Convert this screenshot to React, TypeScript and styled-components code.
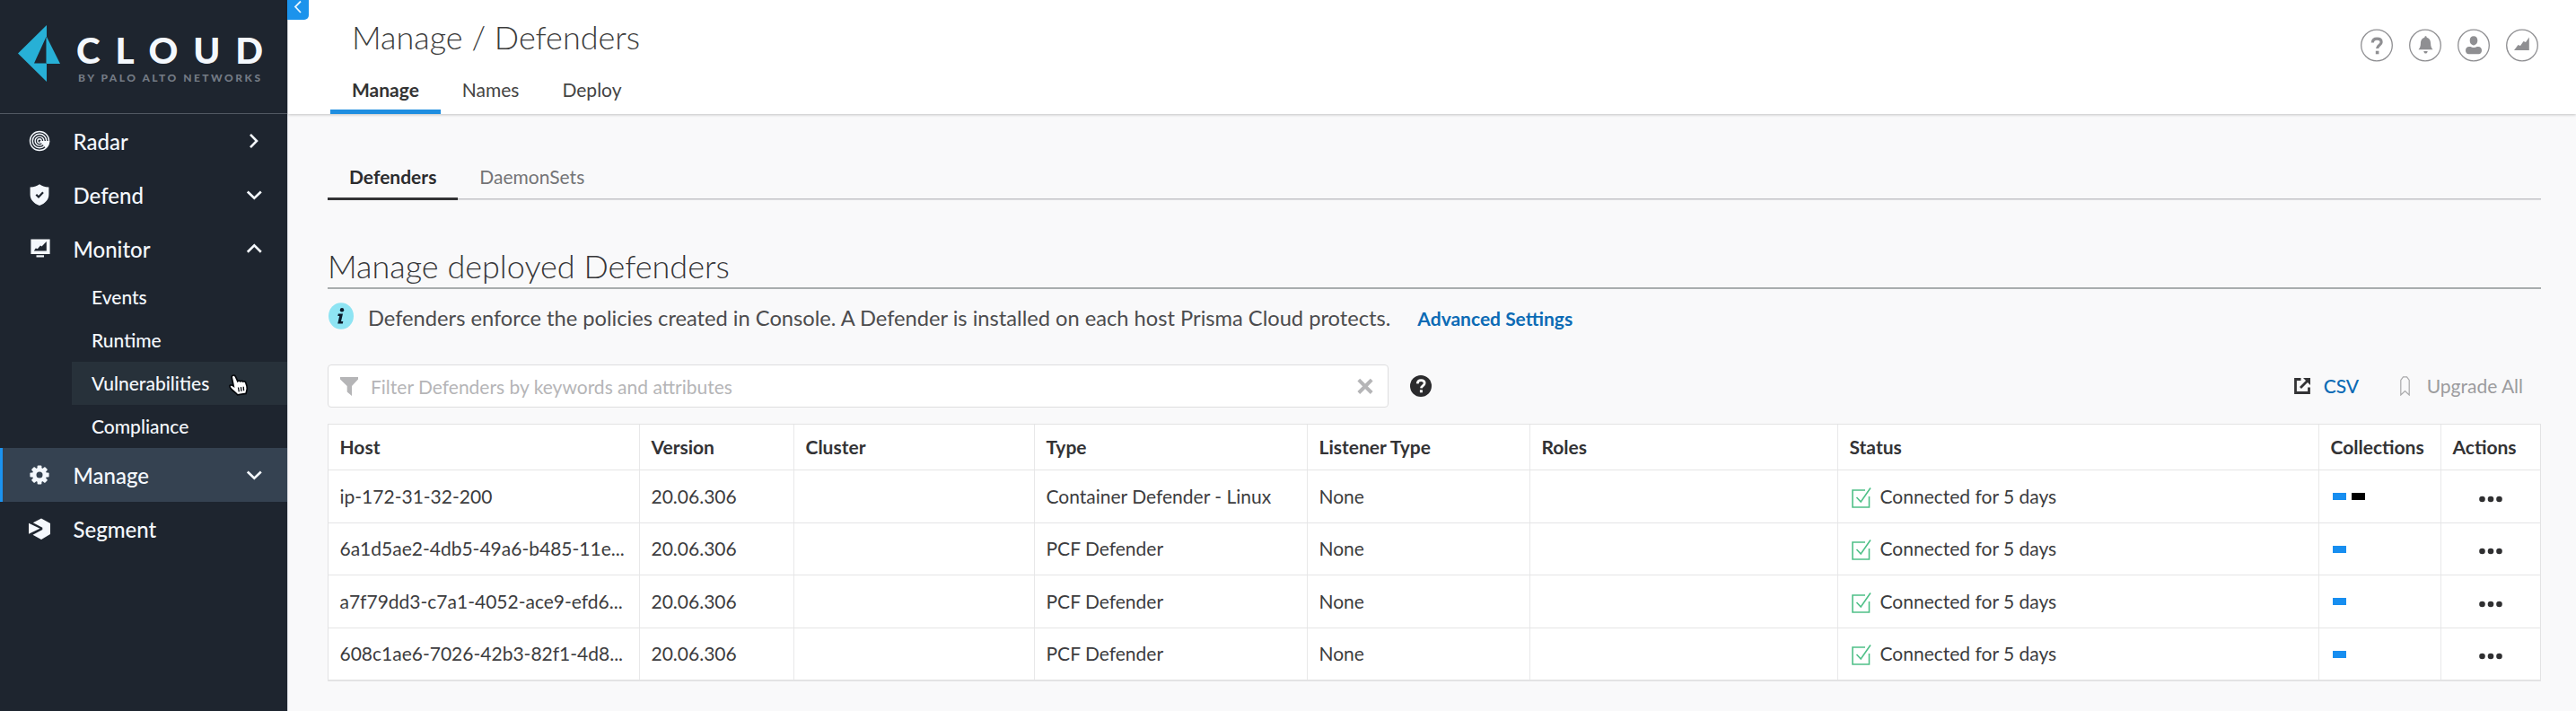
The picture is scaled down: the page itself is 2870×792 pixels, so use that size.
import React from "react";
import styled, { createGlobalStyle } from "styled-components";

const GlobalStyle = createGlobalStyle`
  *, *::before, *::after { box-sizing: border-box; }
  body {
    margin: 0;
    background: #f9f9fa;
    color: #3c3c3e;
    font-family: Lato, "Liberation Sans", sans-serif;
    font-size: 21px;
  }
`;

const Shell = styled.div`
  display: flex;
  width: 2870px;
  height: 792px;
  overflow: hidden;
`;

/* ---------- sidebar ---------- */

const Sidebar = styled.aside`
  flex: 0 0 320px;
  background: #1e252f;
  color: #f4f8fd;
`;

const Brand = styled.div`
  display: flex;
  height: 127px;
  padding: 28px 0 0 20px;
  border-bottom: 1px solid #525963;
`;

const Logo = styled.svg`
  display: block;
  width: 48px;
  height: 64px;
`;

const BrandText = styled.div`
  display: flex;
  flex-direction: column;
  padding: 3px 0 0 17px;
`;

const BrandName = styled.div`
  font-size: 40.5px;
  font-weight: 900;
  line-height: 49px;
  letter-spacing: 16.8px;
  white-space: nowrap;
`;

const BrandTag = styled.div`
  padding-left: 2px;
  color: #737a84;
  font-size: 12px;
  font-weight: 900;
  line-height: 14px;
  letter-spacing: 2.5px;
  white-space: nowrap;
`;

const NavRow = styled.div<{ $active?: boolean }>`
  display: flex;
  align-items: center;
  height: 60px;
  padding: 0 28px 0 ${(p) => (p.$active ? 29 : 32)}px;
  border-left: ${(p) => (p.$active ? "3px solid #1b93f0" : "0")};
  background: ${(p) => (p.$active ? "#354251" : "transparent")};
`;

const NavIcon = styled.svg`
  display: block;
  width: 24px;
  height: 24px;
`;

const NavLabel = styled.span`
  flex: 1;
  padding: 1px 0 0 25.5px;
  font-size: 24px;
  font-weight: 500;
  line-height: 30px;
`;

const Chevron = styled.svg`
  display: block;
  width: 18px;
  height: 18px;
  fill: none;
  stroke: currentColor;
  stroke-width: 2.6;
`;

const SubRow = styled.div<{ $hover?: boolean }>`
  display: flex;
  align-items: center;
  height: 48px;
  margin-left: 80px;
  padding: 0 0 2px 22px;
  background: ${(p) => (p.$hover ? "#27313a" : "transparent")};
  font-size: 21px;
  font-weight: 500;
`;

const Pointer = styled.svg`
  width: 24px;
  height: 26px;
  margin: 6px 0 0 21px;
`;

/* ---------- main column ---------- */

const Main = styled.main`
  flex: 1;
  min-width: 0;
  border-left: 1px solid #d5d8de;
`;

const Header = styled.header`
  position: relative;
  display: flex;
  justify-content: space-between;
  height: 127px;
  padding: 19px 42px 0 47px;
  background: #fff;
  box-shadow: 0 1px 3px rgba(0, 0, 0, 0.22);
`;

const CollapseTab = styled.div`
  position: absolute;
  top: 0;
  left: -1px;
  display: flex;
  justify-content: center;
  width: 24px;
  height: 22px;
  border-radius: 0 0 5px 0;
  background: #1b93ec;
  color: #e8f6ff;
`;

const PageTitle = styled.h1`
  margin: 0;
  padding-left: 24px;
  color: #3c3c3c;
  font-size: 36px;
  font-weight: 300;
  line-height: 45px;
`;

const Tabs = styled.nav`
  display: flex;
  margin-top: 13px;
`;

const Tab = styled.div<{ $active?: boolean }>`
  height: 50px;
  padding: 0 24px;
  border-bottom: 5px solid ${(p) => (p.$active ? "#1f8ee0" : "transparent")};
  color: ${(p) => (p.$active ? "#333" : "#444")};
  font-size: 21px;
  font-weight: ${(p) => (p.$active ? 700 : 400)};
  line-height: 46px;
`;

const HeaderIcons = styled.div`
  display: flex;
  gap: 18px;
  margin-top: 13px;
`;

const RoundIcon = styled.svg`
  display: block;
  width: 36px;
  height: 37px;
`;

const Content = styled.div`
  padding: 47px 39px 0 44px;
`;

const SubTabs = styled.div`
  display: flex;
  height: 49px;
  background: linear-gradient(#c3c3c6, #c3c3c6) 0 47px / 100% 1.5px no-repeat;
`;

const SubTab = styled.div<{ $active?: boolean }>`
  padding: 0 24px;
  border-bottom: 3px solid ${(p) => (p.$active ? "#333335" : "transparent")};
  color: ${(p) => (p.$active ? "#2c2c2e" : "#747476")};
  font-size: 21px;
  font-weight: ${(p) => (p.$active ? 700 : 400)};
  line-height: 46px;
`;

const SectionTitle = styled.h2`
  height: 99px;
  margin: 0;
  padding-top: 50px;
  border-bottom: 2px solid #a9adae;
  color: #363638;
  font-size: 36px;
  font-weight: 300;
  line-height: 46px;
`;

const Notice = styled.div`
  display: flex;
  align-items: center;
  height: 60px;
  padding-left: 1px;
  color: #4c4c4e;
  font-size: 23.68px;
`;

const NoticeText = styled.span`
  padding-top: 3px;
`;

const InfoIcon = styled.svg`
  width: 28px;
  height: 30px;
  margin-right: 16px;
`;

const NoticeLink = styled.a`
  margin-left: 30px;
  padding-top: 4px;
  color: #0c6bb5;
  font-size: 21px;
  font-weight: 700;
`;

const Toolbar = styled.div`
  display: flex;
  align-items: center;
  height: 48px;
  margin-top: 24px;
`;

const FilterBox = styled.div`
  display: flex;
  align-items: center;
  width: 1182px;
  height: 48px;
  padding: 0 16px 0 13px;
  border: 1.5px solid #dededf;
  border-radius: 4px;
  background: #fff;
  color: #b5b5b7;
`;

const FilterText = styled.span`
  flex: 1;
  padding: 1px 0 0 14px;
  font-size: 21px;
`;

const SmallIcon = styled.svg<{ $w: number; $h: number }>`
  display: block;
  flex: none;
  width: ${(p) => p.$w}px;
  height: ${(p) => p.$h}px;
`;

const HelpIcon = styled(SmallIcon)`
  margin-left: 24px;
`;

const ToolActions = styled.div`
  display: flex;
  align-items: center;
  margin-left: auto;
  padding-right: 20px;
`;

const CsvLink = styled.a`
  margin: 0 46px 0 15px;
  padding-bottom: 2px;
  color: #0c6bb5;
  font-size: 21px;
  font-weight: 500;
`;

const UpgradeAll = styled.span`
  margin-left: 18.5px;
  padding-bottom: 2px;
  color: #9c9c9e;
  font-size: 21px;
`;

const Grid = styled.div`
  margin-top: 18px;
  border: 1px solid #e3e3e4;
  border-bottom-width: 2px;
  background: #fff;
`;

const GridRow = styled.div<{ $head?: boolean }>`
  display: grid;
  grid-template-columns: 346px 172px 268px 304px 248px 343px 536px 136px 1fr;
  height: ${(p) => (p.$head ? 50 : 58.5)}px;
  color: ${(p) => (p.$head ? "#333335" : "#3c3c3e")};
  font-weight: ${(p) => (p.$head ? 700 : 400)};

  & + & {
    border-top: 1.5px solid #e5e5e6;
  }
`;

const Cell = styled.div<{ $center?: boolean }>`
  display: flex;
  align-items: center;
  justify-content: ${(p) => (p.$center ? "center" : "flex-start")};
  min-width: 0;
  padding: 0 11px 1px 12.5px;
  white-space: nowrap;

  & + & {
    border-left: 1px solid #e8e8e9;
  }
`;

const StatusIcon = styled(SmallIcon)`
  margin: 3px 10px 0 2px;
`;

const Swatch = styled.span<{ $color: string }>`
  width: 15px;
  height: 8px;
  margin: 2px 3px 0 2.5px;
  background: ${(p) => p.$color};
`;

const Dots = styled(SmallIcon)`
  margin: 7px 1.5px 0 0;
`;

const RadarIcon = () => (
  <NavIcon viewBox="0 0 24 24" fill="none" stroke="currentColor" strokeWidth="1.4">
    <circle cx="12" cy="12" r="10.5" />
    <circle cx="12" cy="12" r="7.7" />
    <circle cx="12" cy="12" r="4.9" />
    <circle cx="12" cy="12" r="2.2" />
    <path d="M12 12h11.4a11.4 11.4 0 0 1-4 8.2z" fill="currentColor" stroke="none" />
  </NavIcon>
);

const ShieldIcon = () => (
  <NavIcon viewBox="0 0 24 24">
    <path
      d="M12 0.2c2.6 2 5.6 3 10.4 3.2v8c0 6-4 10-10.4 12.6C5.6 21.4 1.6 17.4 1.6 11.4v-8C6.4 3.2 9.4 2.2 12 0.2z"
      fill="currentColor"
    />
    <path d="M8.3 11.7l2.7 2.8 5-5.3" fill="none" stroke="#1e252f" strokeWidth="2.2" />
  </NavIcon>
);

const MonitorIcon = () => (
  <NavIcon viewBox="0 0 24 24">
    <path d="M2.4 1.5h21.2v16.5h-21.2z" fill="currentColor" />
    <path d="M8.5 19.3h8.5v2.2h-8.5z" fill="currentColor" />
    <path d="M5.8 14.6l2-3 2 .6 3.2-3.7 1.5 1 5.3-5.4v10.5z" fill="#1e252f" />
  </NavIcon>
);

const GearIcon = () => (
  <NavIcon viewBox="0 0 24 24" fill="currentColor">
    {[0, 45, 90, 135].map((a) => (
      <rect key={a} x="9.6" y="1.4" width="4.8" height="21.2" rx="1" transform={`rotate(${a} 12 12)`} />
    ))}
    <circle cx="12" cy="12" r="8" />
    <circle cx="12" cy="12" r="3.5" fill="#354251" />
  </NavIcon>
);

const SegmentIcon = () => (
  <NavIcon viewBox="0 0 24 24" fill="currentColor">
    <path d="M14 0.5l10.2 5.5v12L14 24l-9.5-5.3 10.8-5.8v-2.2L4.8 5.3z" />
    <path d="M0 5.8l12.5 6L0 17.7z" />
  </NavIcon>
);

const chevrons = {
  right: "M5 1.8L12 9l-7 7.2",
  down: "M1.8 5.5L9.3 12.7l7.5-7.2",
  up: "M1.8 12.7L9.3 5.3l7.5 7.4",
};

type NavItemProps = {
  icon: React.ReactNode;
  label: string;
  dir?: keyof typeof chevrons;
  active?: boolean;
};

const NavItem = ({ icon, label, dir, active }: NavItemProps) => (
  <NavRow $active={active}>
    {icon}
    <NavLabel>{label}</NavLabel>
    {dir && (
      <Chevron viewBox="0 0 18 18">
        <path d={chevrons[dir]} />
      </Chevron>
    )}
  </NavRow>
);

const PointerIcon = () => (
  <Pointer viewBox="0 0 24 26">
    <path
      d="M5.5 2.2c1.4-.6 2.5.2 3 1.5l2.3 5c.9-.9 2.3-.9 3 .1 1-.8 2.3-.6 3 .3 1-.6 2.5-.2 2.9 1l1.3 4c.7 2.4.4 4.4-.5 6.5l-.5 1.8-9.3 1.5c-1.5-2.4-4.3-3.5-6.8-6.3-1.6-1.7-2.7-3-1.7-4.2 1-1.1 2.4-.5 4 .7L4.3 4.8c-.4-1.100-.1-2.100 1.200-2.600z"
      fill="#fff"
      stroke="#05080c"
      strokeWidth="1.7"
    />
    <path d="M11.5 15.5l.8 4.8M14.4 15.2l.6 4.6M17.2 14.8l.4 4.5" stroke="#05080c" strokeWidth="1.3" />
  </Pointer>
);

const columns = ["Host", "Version", "Cluster", "Type", "Listener Type", "Roles", "Status", "Collections", "Actions"];

const defenders = [
  { host: "ip-172-31-32-200", type: "Container Defender - Linux", tags: ["#178ef0", "#000"] },
  { host: "6a1d5ae2-4db5-49a6-b485-11e...", type: "PCF Defender", tags: ["#178ef0"] },
  { host: "a7f79dd3-c7a1-4052-ace9-efd6...", type: "PCF Defender", tags: ["#178ef0"] },
  { host: "608c1ae6-7026-42b3-82f1-4d8...", type: "PCF Defender", tags: ["#178ef0"] },
];

export default function App() {
  return (
    <>
      <GlobalStyle />
      <Shell>
        <Sidebar>
          <Brand>
            <Logo viewBox="0 0 48 64">
              <path
                d="M32 0V13L47 43H32V63L0 31.5zM31 14L18 42.5H31z"
                fill="#27b0d6"
                fillRule="evenodd"
              />
              <path d="M31.5 13V43" stroke="#1e6f8c" strokeWidth="1" />
            </Logo>
            <BrandText>
              <BrandName>CLOUD</BrandName>
              <BrandTag>BY PALO ALTO NETWORKS</BrandTag>
            </BrandText>
          </Brand>
          <NavItem icon={<RadarIcon />} label="Radar" dir="right" />
          <NavItem icon={<ShieldIcon />} label="Defend" dir="down" />
          <NavItem icon={<MonitorIcon />} label="Monitor" dir="up" />
          <SubRow>Events</SubRow>
          <SubRow>Runtime</SubRow>
          <SubRow $hover>
            Vulnerabilities
            <PointerIcon />
          </SubRow>
          <SubRow>Compliance</SubRow>
          <NavItem icon={<GearIcon />} label="Manage" dir="down" active />
          <NavItem icon={<SegmentIcon />} label="Segment" />
        </Sidebar>

        <Main>
          <Header>
            <CollapseTab>
              <SmallIcon $w={24} $h={22} viewBox="0 0 24 22" fill="none" stroke="currentColor" strokeWidth="1.8">
                <path d="M15 1.5L9 7.5l6 6.5" />
              </SmallIcon>
            </CollapseTab>
            <div>
              <PageTitle>Manage / Defenders</PageTitle>
              <Tabs>
                <Tab $active>Manage</Tab>
                <Tab>Names</Tab>
                <Tab>Deploy</Tab>
              </Tabs>
            </div>
            <HeaderIcons>
              <RoundIcon viewBox="0 0 36 37" fill="none" stroke="#8f8f92" strokeWidth="1.3">
                <circle cx="18" cy="18.5" r="17.3" />
                <path d="M13.3 15.5c.2-2.9 2.2-4.3 4.9-4.3 2.9 0 4.9 1.4 4.9 3.8 0 3.4-4.3 3.1-4.5 7" strokeWidth="3.2" />
                <path d="M16.8 24.7h3.6v3.6h-3.6z" fill="#8f8f92" stroke="none" />
              </RoundIcon>
              <RoundIcon viewBox="0 0 36 37" fill="none" stroke="#8f8f92" strokeWidth="1.3">
                <circle cx="18" cy="18.5" r="17.3" />
                <path
                  d="M18.5 8.3c.9 0 1.2.6 1.2 1.5 3.3 1 4.3 3.6 4.4 6.7.1 3 .6 4.6 2.4 6.7H10.5c1.8-2.1 2.3-3.7 2.4-6.7.1-3.1 1.1-5.7 4.4-6.7 0-.9.3-1.5 1.2-1.5zM16.3 25h4.4c-.3 1.8-1.1 2.6-2.2 2.6s-1.9-.8-2.2-2.6z"
                  fill="#8f8f92"
                  stroke="none"
                />
              </RoundIcon>
              <RoundIcon viewBox="0 0 36 37" fill="none" stroke="#8f8f92" strokeWidth="1.3">
                <circle cx="18" cy="18.5" r="17.3" />
                <path
                  d="M18 8.3c2.7 0 4.3 2 4.3 4.8s-1.7 5.3-4.3 5.3-4.3-2.5-4.3-5.3S15.3 8.3 18 8.3zM13 20h1.5c2 1.2 5.2 1.2 7.2 0H23c2.7 0 4 1.6 4 4.3 0 2.4-1.2 3.9-3.5 3.9h-11c-2.3 0-3.5-1.5-3.5-3.9C9 21.6 10.3 20 13 20z"
                  fill="#8f8f92"
                  stroke="none"
                />
              </RoundIcon>
              <RoundIcon viewBox="0 0 36 37" fill="none" stroke="#8f8f92" strokeWidth="1.3">
                <circle cx="18" cy="18.5" r="17.3" />
                <path d="M9 24l4.5-6 2.5 1 3.5-5 2.5 1L25.8 9.5V24z" fill="#8f8f92" stroke="none" />
              </RoundIcon>
            </HeaderIcons>
          </Header>

          <Content>
            <SubTabs>
              <SubTab $active>Defenders</SubTab>
              <SubTab>DaemonSets</SubTab>
            </SubTabs>

            <SectionTitle>Manage deployed Defenders</SectionTitle>

            <Notice>
              <InfoIcon viewBox="0 0 28 30">
                <ellipse cx="14" cy="15" rx="14" ry="14.8" fill="#8ee4f3" />
                <circle cx="15" cy="8.3" r="2.2" fill="#0a1a2a" />
                <path d="M10.8 12.5h5.2l-2 8.6h2.3l-.5 2.4h-5.6l2-8.6h-1.9z" fill="#0a1a2a" />
              </InfoIcon>
              <NoticeText>
                Defenders enforce the policies created in Console. A Defender is installed on each host Prisma Cloud
                protects.
              </NoticeText>
              <NoticeLink>Advanced Settings</NoticeLink>
            </Notice>

            <Toolbar>
              <FilterBox>
                <SmallIcon $w={20} $h={21} viewBox="0 0 20 21" fill="currentColor">
                  <path d="M0 0h20v2.5l-7 7.5v11l-5.3-4.5V10L0 2.5z" />
                </SmallIcon>
                <FilterText>Filter Defenders by keywords and attributes</FilterText>
                <SmallIcon $w={18} $h={18} viewBox="0 0 18 18" fill="none" stroke="currentColor" strokeWidth="4">
                  <path d="M1.8 2.2L16.2 16.5M16.2 2.2L1.8 16.5" />
                </SmallIcon>
              </FilterBox>
              <HelpIcon $w={24} $h={24} viewBox="0 0 24 24" fill="none">
                <circle cx="12" cy="12" r="12" fill="#2b2b2d" />
                <path d="M8.2 9.3c.2-2.5 1.7-3.7 4-3.7 2.4 0 4 1.2 4 3.2 0 2.8-3.6 2.7-3.8 5.6" stroke="#fff" strokeWidth="2.7" />
                <path d="M10.9 16.3h3v3h-3z" fill="#fff" />
              </HelpIcon>
              <ToolActions>
                <SmallIcon $w={18} $h={18} viewBox="0 0 18 18" fill="none" stroke="#333335" strokeWidth="2.8">
                  <path d="M7.5 1.5h-6v15h15v-6M7 11L15 3" />
                  <path d="M10 0h8v8l-2.5-2.5-3-3z" fill="#333335" stroke="none" />
                </SmallIcon>
                <CsvLink>CSV</CsvLink>
                <SmallIcon $w={11} $h={22} viewBox="0 0 11 22" fill="none" stroke="#a9a9ab" strokeWidth="1.2">
                  <path d="M.8 21V4.5L3.5.8h4l2.7 3.7V21l-4.7-4.5z" />
                </SmallIcon>
                <UpgradeAll>Upgrade All</UpgradeAll>
              </ToolActions>
            </Toolbar>

            <Grid>
              <GridRow $head>
                {columns.map((c) => (
                  <Cell key={c}>{c}</Cell>
                ))}
              </GridRow>
              {defenders.map((d) => (
                <GridRow key={d.host}>
                  <Cell>{d.host}</Cell>
                  <Cell>20.06.306</Cell>
                  <Cell />
                  <Cell>{d.type}</Cell>
                  <Cell>None</Cell>
                  <Cell />
                  <Cell>
                    <StatusIcon $w={22} $h={24} viewBox="0 0 22 24" fill="none" stroke="#4fc088" strokeWidth="1.6">
                      <path d="M15 4H1v19h18.5V11" />
                      <path d="M5.5 12l4.7 5L21 1.5" />
                    </StatusIcon>
                    Connected for 5 days
                  </Cell>
                  <Cell>
                    {d.tags.map((t) => (
                      <Swatch key={t} $color={t} />
                    ))}
                  </Cell>
                  <Cell $center>
                    <Dots $w={26} $h={8} viewBox="0 0 26 8" fill="#2f2f31">
                      <circle cx="3.5" cy="4" r="3.3" />
                      <circle cx="13" cy="4" r="3.3" />
                      <circle cx="22.5" cy="4" r="3.3" />
                    </Dots>
                  </Cell>
                </GridRow>
              ))}
            </Grid>
          </Content>
        </Main>
      </Shell>
    </>
  );
}
